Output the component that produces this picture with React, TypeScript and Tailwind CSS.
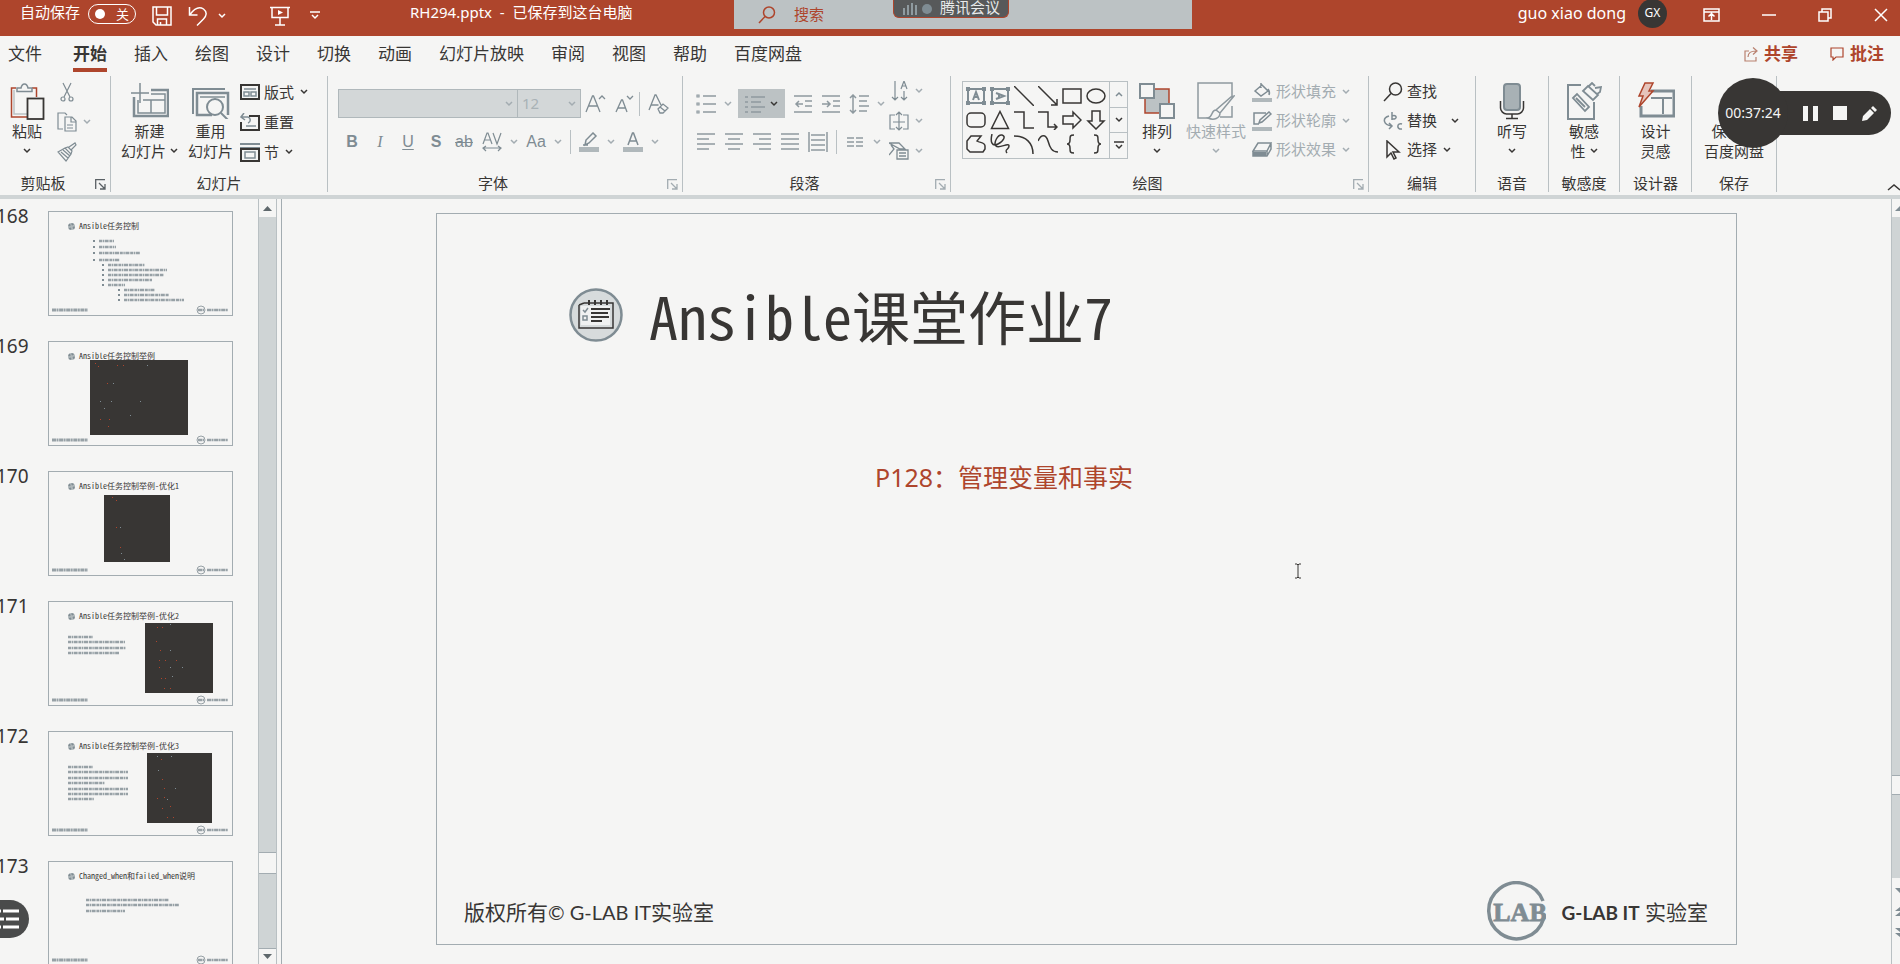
import React, { ReactNode } from 'react';

type IconProps = { w: number; h: number; className?: string; children: ReactNode };

function Svg({ w, h, className = '', children }: IconProps) {
  return (
    <svg
      width={w}
      height={h}
      viewBox={`0 0 ${w} ${h}`}
      fill="none"
      stroke="currentColor"
      strokeWidth="1.5"
      className={`shrink-0 ${className}`}
      aria-hidden="true"
    >
      {children}
    </svg>
  );
}

function Chevron({ muted = false }: { muted?: boolean }) {
  return (
    <Svg w={8} h={6} className={muted ? 'text-[#a3acb1]' : 'text-[#383634]'}>
      <path d="M1 1l3 3 3-3" />
    </Svg>
  );
}

function Launcher({ muted = false }: { muted?: boolean }) {
  return (
    <button
      aria-label="更多选项"
      className={`absolute right-1 bottom-0.5 ${muted ? 'text-[#a3acb1]' : 'text-[#5a6064]'}`}
    >
      <Svg w={11} h={11}>
        <path d="M.7 10V.7H10M4 4l6 6M10 5v5H5" strokeWidth="1.3" />
      </Svg>
    </button>
  );
}

function Group({
  width,
  label,
  launcher,
  children,
}: {
  width: string;
  label: string;
  launcher?: 'on' | 'muted';
  children: ReactNode;
}) {
  return (
    <section
      aria-label={label}
      className={`relative flex h-[116px] shrink-0 flex-col border-r border-[#b9c0c3] ${width}`}
    >
      <div className="flex flex-1">{children}</div>
      <div className={`mb-px h-4 text-center leading-4 ${launcher ? 'pr-6' : ''}`}>{label}</div>
      {launcher && <Launcher muted={launcher === 'muted'} />}
    </section>
  );
}

function BigButton({
  icon,
  lines,
  chevron,
  muted = false,
  width,
}: {
  icon: ReactNode;
  lines: string[];
  chevron?: boolean;
  muted?: boolean;
  width: string;
}) {
  const last = lines.length - 1;
  return (
    <button className={`flex flex-col items-center pt-1.5 ${width} ${muted ? 'text-[#a3acb1]' : ''}`}>
      <span className="flex h-[38px] items-center">{icon}</span>
      <span className="mt-px flex flex-col items-center leading-5 whitespace-nowrap">
        {lines.map((line, i) => (
          <span key={line} className="flex items-center gap-1">
            {line}
            {chevron && i === last && i > 0 && <Chevron muted={muted} />}
          </span>
        ))}
        {chevron && last === 0 && (
          <span className="flex h-5 items-center">
            <Chevron muted={muted} />
          </span>
        )}
      </span>
    </button>
  );
}

function RowButton({
  icon,
  label,
  chevron,
  muted = false,
}: {
  icon: ReactNode;
  label?: string;
  chevron?: boolean;
  muted?: boolean;
}) {
  return (
    <button
      aria-label={label ?? '工具'}
      className={`flex h-full items-center gap-1 whitespace-nowrap ${muted ? 'text-[#a3acb1]' : ''}`}
    >
      <span className="flex w-5 justify-center">{icon}</span>
      {label}
      {chevron && (
        <span className="ml-0.5">
          <Chevron muted={muted} />
        </span>
      )}
    </button>
  );
}

function Tool({ label, drop, children }: { label: string; drop?: boolean; children: ReactNode }) {
  return (
    <button aria-label={label} className="flex h-5 items-center">
      <span className="flex w-7 items-center justify-center">{children}</span>
      {drop && (
        <span className="flex w-4 justify-center">
          <Chevron muted />
        </span>
      )}
    </button>
  );
}

function Lines({ d }: { d: string }) {
  return (
    <Svg w={20} h={20}>
      <path d={d} />
    </Svg>
  );
}

const Divider = () => <span className="mx-1 h-6 w-px bg-[#b9c0c3]" />;

/* ---------- title bar ---------- */

function TitleBar() {
  return (
    <header className="flex h-9 shrink-0 bg-[#ae452c] text-[15px] text-white">
      <div className="flex h-6 w-[734px] shrink-0 items-center pl-5">
        <label htmlFor="autosave" className="leading-6">自动保存</label>
        <button
          id="autosave"
          role="switch"
          aria-checked="false"
          className="mt-1 ml-2 flex h-5 w-12 items-center justify-between rounded-full border border-white px-1.5 text-[13px]"
        >
          <span className="size-2.5 rounded-full bg-white" />
          <span className="leading-4">关</span>
        </button>
        <button aria-label="保存" className="mt-2 ml-4">
          <Svg w={20} h={20}>
            <path d="M1 1h18v18H4l-3-3zM4.500 1v8h11V1M5.500 19v-6h9v6M8.500 19v-3" />
          </Svg>
        </button>
        <button aria-label="撤消" className="mt-2 ml-4 flex items-center gap-2.5">
          <Svg w={20} h={20}>
            <path d="M1.500 1v8h8M2 8.500C6 3 11 0 15.500 3c4 3 3 7 0 10L9 19.500" />
          </Svg>
          <Svg w={8} h={6}>
            <path d="M1 1l3 3 3-3" />
          </Svg>
        </button>
        <button aria-label="从头开始放映" className="mt-2 ml-11">
          <Svg w={20} h={20}>
            <path d="M0 1.500h20M2 1.500v10h16v-10M10 11.500v7M5 19h10" />
            <path d="M8 4l5 2.500L8 9z" fill="currentColor" stroke="none" />
          </Svg>
        </button>
        <button aria-label="自定义快速访问工具栏" className="mt-1.5 ml-5">
          <Svg w={10} h={9}>
            <path d="M0 1h10M2 4l3 3 3-3" />
          </Svg>
        </button>
        <h1 className="ml-[90px] whitespace-nowrap">RH294.pptx&nbsp; -&nbsp; 已保存到这台电脑</h1>
      </div>
      <div className="relative flex h-[29px] w-[458px] shrink-0 items-center bg-[#bcc2c4] pl-6 text-[#ae452c]">
        <Svg w={18} h={18}>
          <circle cx="11" cy="6.500" r="5.500" />
          <path d="M7 10.500L1 17" />
        </Svg>
        <input
          aria-label="搜索"
          placeholder="搜索"
          className="ml-[18px] w-20 bg-transparent outline-none placeholder:text-[#ae452c]"
        />
        <div className="absolute top-0 left-[159px] flex h-[18px] w-[116px] items-center gap-1 rounded-b-md border-x border-b border-[#ae452c] bg-[#57595a] pl-2 text-[15px] text-[#e8eaea]">
          <Svg w={16} h={12} className="text-[#8f9a9f]">
            <path d="M2 5v7M6 2v10M10 0v12M14 2v10" strokeWidth="2" />
          </Svg>
          <span className="size-2.5 rounded-full bg-[#7f8c93]" />
          <span className="-mt-1 ml-1 leading-4 whitespace-nowrap">腾讯会议</span>
        </div>
      </div>
      <div className="flex h-[26px] flex-1 items-center justify-end pr-3">
        <span className="text-base whitespace-nowrap">guo xiao dong</span>
        <span className="ml-3 flex size-[29px] shrink-0 items-center justify-center rounded-full bg-[#383634] text-xs">
          GX
        </span>
        <button aria-label="功能区显示选项" className="mt-1 ml-9">
          <Svg w={17} h={14}>
            <path d="M1 1h15v12H1zM1 4h15M8.500 12V6M5.500 8.500l3-3 3 3" />
          </Svg>
        </button>
        <button aria-label="最小化" className="mt-1 ml-[42px]">
          <Svg w={14} h={14}>
            <path d="M0 7h14" />
          </Svg>
        </button>
        <button aria-label="还原" className="mt-1 ml-[42px]">
          <Svg w={14} h={14}>
            <path d="M1 4h9v9H1zM4 4V1h9v9h-3" />
          </Svg>
        </button>
        <button aria-label="关闭" className="mt-1 ml-[42px]">
          <Svg w={14} h={14}>
            <path d="M1 1l12 12M13 1L1 13" />
          </Svg>
        </button>
      </div>
    </header>
  );
}

const TABS = ['插入', '绘图', '设计', '切换', '动画', '幻灯片放映', '审阅', '视图', '帮助', '百度网盘'];

function TabRow() {
  return (
    <nav className="flex h-10 shrink-0 items-start pt-1.5 pr-4 pl-2 text-[17px] leading-6">
      <a href="#file" className="mr-[31px]">文件</a>
      <a href="#home" className="mr-[27px] h-[30px] border-b-4 border-[#ae452c] font-bold">开始</a>
      <div className="flex flex-1 gap-[27px]">
        {TABS.map((t) => (
          <a key={t} href={`#${t}`} className="whitespace-nowrap">
            {t}
          </a>
        ))}
      </div>
      <button className="flex items-center gap-1.5 font-bold text-[#ae452c]">
        <Svg w={14} h={16} className="text-[#b9816f]">
          <path d="M5 5H1v10h11v-4M4 11c0-4 3-6 8-6M9 1.500L13 5 9 8.500" strokeWidth="1.2" />
        </Svg>
        共享
      </button>
      <button className="ml-8 flex items-center gap-1.5 font-bold text-[#ae452c]">
        <Svg w={14} h={14}>
          <path d="M1 1h12v9H6l-3 3v-3H1z" strokeWidth="1.2" />
        </Svg>
        批注
      </button>
    </nav>
  );
}

/* ---------- ribbon ---------- */

const SHAPES: ReactNode[] = [
  <g key="tb" className="text-[#7f8c93]"><rect x="2" y="3" width="16" height="14" strokeWidth="2" /><path d="M7 14l3-8 3 8M8 11h4" strokeWidth="2" /><path d="M0 1h4v4H0zM16 1h4v4h-4zM0 15h4v4H0zM16 15h4v4h-4z" fill="currentColor" stroke="none" /></g>,
  <g key="vt" className="text-[#7f8c93]"><rect x="2" y="3" width="16" height="14" strokeWidth="2" /><path d="M6 7l8 3-8 3M9 8v4" strokeWidth="2" /><path d="M0 1h4v4H0zM16 1h4v4h-4zM0 15h4v4H0zM16 15h4v4h-4z" fill="currentColor" stroke="none" /></g>,
  <path key="ln" d="M0 0l20 20" />,
  <path key="ar" d="M0 0l19 19M19 13v6h-6" />,
  <rect key="re" x="1" y="3" width="18" height="14" />,
  <ellipse key="el" cx="10" cy="10" rx="9" ry="7" />,
  <rect key="rr" x="1" y="3" width="18" height="14" rx="4" />,
  <path key="tr" d="M10 1.500L18.500 18.500h-17z" />,
  <path key="el1" d="M0 2h10v16h10" />,
  <path key="el2" d="M0 2h10v15h9M16 14l3 3-3 3" />,
  <path key="ra" d="M1 6h10V2l8 8-8 8v-4H1z" />,
  <path key="da" d="M6 1h8v10h4l-8 8-8-8h4z" />,
  <path key="fr" d="M5 2h10l-4 5c3 2 8 1 8 5v3l-2 3H4l-3-3V7z" />,
  <path key="sc" d="M2 0c-2 8 0 13 6 10s8-8 4-9-9 8-6 11 13-4 13 0-5 3-2 7" />,
  <path key="cu" d="M0 2c12 0 19 7 19 18" />,
  <path key="wa" d="M0 7c3-7 8-7 10 0s4 11 10 11" />,
  <path key="lb" d="M12 1c-4 0-4 1-4 5 0 3-1 4-3 4 2 0 3 1 3 4 0 4 0 5 4 5" />,
  <path key="rb" d="M8 1c4 0 4 1 4 5 0 3 1 4 3 4-2 0-3 1-3 4 0 4 0 5-4 5" />,
];

function ShapeGallery() {
  return (
    <div className="mt-[5px] ml-[11px] flex h-[78px] w-[166px] shrink-0 border border-[#b9c0c3]">
      <div className="grid flex-1 grid-cols-6 place-items-center px-px py-0.5">
        {SHAPES.map((s, i) => (
          <button key={i} aria-label={`形状 ${i + 1}`}>
            <Svg w={20} h={20}>{s}</Svg>
          </button>
        ))}
      </div>
      <div className="flex w-[18px] flex-col divide-y divide-[#b9c0c3] border-l border-[#b9c0c3]">
        <button aria-label="上一行" className="flex flex-1 items-center justify-center text-[#7f8c93]">
          <Svg w={8} h={6}><path d="M1 5l3-3 3 3" /></Svg>
        </button>
        <button aria-label="下一行" className="flex flex-1 items-center justify-center">
          <Chevron />
        </button>
        <button aria-label="其他形状" className="flex flex-1 items-center justify-center">
          <Svg w={10} h={9}><path d="M0 1h10M2 4l3 3 3-3" /></Svg>
        </button>
      </div>
    </div>
  );
}

function Ribbon() {
  return (
    <div className="relative flex h-[119px] shrink-0 overflow-hidden">
      <Group width="w-[111px]" label="剪贴板" launcher="on">
        <BigButton
          width="w-[54px]"
          lines={['粘贴']}
          chevron
          icon={
            <Svg w={36} h={38}>
              <path d="M7 6H2.500v29H18M23 6h4.500v9" stroke="#ae452c" />
              <path d="M5 8v24h13" stroke="#bcc2c4" />
              <path d="M8 9.500V6h4c1-5.500 6-5.500 7 0h4v3.500z" stroke="#7f8c93" />
              <rect x="18.500" y="16.500" width="16" height="20.500" strokeWidth="1.8" />
            </Svg>
          }
        />
        <div className="grid auto-rows-[30px] content-start justify-items-start pt-px pl-[3px] text-[#7f8c93]">
          <RowButton icon={<Svg w={14} h={20}><path d="M3 1l7 14M11 1L4 15" strokeWidth="1.2" /><circle cx="3" cy="17" r="2" strokeWidth="1.2" /><circle cx="11" cy="17" r="2" strokeWidth="1.2" /></Svg>} />
          <RowButton muted chevron icon={<Svg w={20} h={20} className="text-[#7f8c93]"><path d="M6 17H1V1h7l2 2M8 5h7l4 4v10H8zM14 5v5h5M10 13h6M10 16h6" strokeWidth="1.2" /></Svg>} />
          <RowButton icon={<Svg w={20} h={20}><path d="M1 10l7-4 6 6-5 7zM8 6l3-1 4 4-1 3M12 5l6-4 1 2-5 5M4 10l7 6M6 8l7 6" strokeWidth="1.2" /></Svg>} />
        </div>
      </Group>

      <Group width="w-[217px]" label="幻灯片">
        <BigButton
          width="w-[77px]"
          lines={['新建', '幻灯片']}
          chevron
          icon={
            <Svg w={38} h={36} className="text-[#7f8c93]">
              <path d="M9 0v20M0 10h18" />
              <path d="M20 7h17v26H3V14" strokeWidth="2.500" />
              <path d="M12 17h22M20 17v13M7 17v13h27V11H20" />
            </Svg>
          }
        />
        <BigButton
          width="w-[45px]"
          lines={['重用', '幻灯片']}
          icon={
            <Svg w={38} h={36} className="text-[#7f8c93]">
              <path d="M1 31V6h32" strokeWidth="2" />
              <path d="M20 32H5V10h31v22" strokeWidth="2.500" />
              <path d="M8 14h25" />
              <circle cx="23" cy="24" r="8" fill="#f5f5f4" strokeWidth="2" />
              <path d="M29 30l8 8" strokeWidth="2" />
            </Svg>
          }
        />
        <div className="grid auto-rows-[30px] content-start justify-items-start pt-px pl-[7px]">
          <RowButton label="版式" chevron icon={<Svg w={20} h={16}><rect x="1" y="1" width="18" height="14" strokeWidth="2" /><path d="M4 5h12M4 8h5v4H4zM11 8h5v4h-5z" stroke="#7f8c93" /></Svg>} />
          <RowButton label="重置" icon={<Svg w={20} h={18}><path d="M9 3h10v14H1V9" strokeWidth="2" /><path d="M4 0L1 4l4 3M1 4h7c3 1 3 5 0 6M6 13h10" stroke="#7f8c93" /></Svg>} />
          <RowButton label="节" chevron icon={<Svg w={20} h={20}><path d="M0 2h20M0 6h20" stroke="#7f8c93" strokeWidth="2" /><rect x="1" y="7" width="18" height="12" strokeWidth="2" /><rect x="5" y="10" width="10" height="6" stroke="#7f8c93" /></Svg>} />
        </div>
      </Group>

      <Group width="w-[355px]" label="字体" launcher="muted">
        <div className="flex flex-col pt-[13px] pl-2.5 text-[#7f8c93]">
          <div className="flex h-[29px] items-center">
            <div className="relative flex h-[29px] w-[180px] items-center border border-[#b0b8bb] bg-[#d3d7d8]">
              <select aria-label="字体名称" disabled className="h-full w-full appearance-none" />
              <span className="absolute right-1"><Chevron muted /></span>
            </div>
            <div className="relative flex h-[29px] w-[63px] items-center border border-l-0 border-[#b0b8bb] bg-[#d3d7d8]">
              <select aria-label="字号" disabled className="h-full w-full appearance-none pl-1 text-[15px] text-[#a9b2b6]">
                <option>12</option>
              </select>
              <span className="absolute right-1"><Chevron muted /></span>
            </div>
            <button aria-label="增大字号" className="ml-1">
              <Svg w={22} h={20}><path d="M1 18L7.500 2h1L15 18M3.500 12h9M14 5l3-3 3 3" strokeWidth="1.3" /></Svg>
            </button>
            <button aria-label="减小字号" className="ml-2">
              <Svg w={20} h={20}><path d="M1 18L6.500 6h1L12 18M3 14h8M12 2l3 3 3-3" strokeWidth="1.3" /></Svg>
            </button>
            <Divider />
            <button aria-label="清除格式" className="ml-1">
              <Svg w={22} h={20}><path d="M1 16L7 1h1l5 10M3.500 11h7M10 15l5-5 5 4-5 5h-3zM12 13l5 4" strokeWidth="1.3" /></Svg>
            </button>
          </div>
          <div className="mt-3.5 flex h-5 items-center font-['Liberation_Sans'] text-base">
            <Tool label="加粗"><b>B</b></Tool>
            <Tool label="倾斜"><i className="font-['Liberation_Serif']">I</i></Tool>
            <Tool label="下划线"><span className="underline underline-offset-2">U</span></Tool>
            <Tool label="阴影"><b>S</b></Tool>
            <Tool label="删除线"><span className="line-through">ab</span></Tool>
            <Tool label="字符间距" drop>
              <Svg w={20} h={20}><path d="M1 12L5 1h1l4 11M2.500 8h6M11 1l4 11 4-11M1 16h18M4 14l-3 2 3 3M16 14l3 2-3 3" strokeWidth="1.2" /></Svg>
            </Tool>
            <Tool label="更改大小写" drop>Aa</Tool>
            <Divider />
            <Tool label="突出显示颜色" drop>
              <Svg w={20} h={20}><path d="M6 13l1-5 7-7 3 3-7 7zM4 13h5" /><path d="M0 15h20v5H0z" fill="#b0b8bb" stroke="none" /></Svg>
            </Tool>
            <Tool label="字体颜色" drop>
              <Svg w={20} h={20}><path d="M5 13L9.500 1h1L15 13M7 9h6" /><path d="M0 15h20v5H0z" fill="#b0b8bb" stroke="none" /></Svg>
            </Tool>
          </div>
        </div>
      </Group>

      <Group width="w-[268px]" label="段落" launcher="muted">
        <div className="flex flex-col pt-[13px] pl-[9px] text-[#8e999f]">
          <div className="flex h-[29px] items-center">
            <Tool label="项目符号" drop>
              <Svg w={20} h={20}>
                <path d="M7 2h13M7 10h13M7 18h13" />
                <path d="M1 1h2v2H1zM1 9h2v2H1zM1 17h2v2H1z" strokeWidth="1.2" />
              </Svg>
            </Tool>
            <button aria-label="编号" className="mr-0.5 ml-0.5 flex h-[29px] w-[47px] items-center justify-between bg-[#bcc2c4] px-[7px]">
              <Lines d="M0 3h3M6 3h14M0 8h3M6 8h10M0 13h3M6 13h14M0 18h3M6 18h10" />
              <Chevron />
            </button>
            <span className="flex pl-0.5">
              <Tool label="减少缩进"><Lines d="M1 2h18M12 7h7M12 12h7M1 18h18M6 7l-3 3 3 3M3 10h7" /></Tool>
              <Tool label="增加缩进"><Lines d="M1 2h18M12 7h7M12 12h7M1 18h18M6 7l3 3-3 3M1 10h7" /></Tool>
              <Tool label="行距" drop><Lines d="M4 1v18M1 4l3-3 3 3M1 16l3 3 3-3M10 2h10M10 7h8M10 12h10M10 17h8" /></Tool>
            </span>
          </div>
          <div className="mt-3.5 flex h-5 items-center">
            <Tool label="左对齐"><Lines d="M1 2h18M1 7h12M1 12h18M1 17h12" /></Tool>
            <Tool label="居中"><Lines d="M1 2h18M4 7h12M1 12h18M4 17h12" /></Tool>
            <Tool label="右对齐"><Lines d="M1 2h18M7 7h12M1 12h18M7 17h12" /></Tool>
            <Tool label="两端对齐"><Lines d="M1 2h18M1 7h18M1 12h18M1 17h18" /></Tool>
            <Tool label="分散对齐"><Lines d="M1 0v20M19 0v20M3 3h14M3 8h14M3 13h14M3 18h14" /></Tool>
            <Divider />
            <Tool label="分栏" drop><Lines d="M2 6h7M11 6h7M2 10h7M11 10h7M2 14h7M11 14h7" /></Tool>
          </div>
        </div>
        <div className="grid flex-1 auto-rows-[30px] content-start justify-items-start text-[#7f8c93]">
          <RowButton muted chevron icon={<Svg w={20} h={20} className="text-[#7f8c93]"><path d="M6 0v19M3 16l3 3 3-3M12 8l3-8 3 8M13 5h4M15 10v9M12 16l3 3 3-3" strokeWidth="1.2" /></Svg>} />
          <RowButton muted chevron icon={<Svg w={20} h={20} className="text-[#7f8c93]"><path d="M6 4H1v14h5M14 4h5v14h-5M10 1v18M7 4l3-3 3 3M7 16l3 3 3-3M4 11h12" strokeWidth="1.2" /></Svg>} />
          <RowButton muted chevron icon={<Svg w={20} h={18} className="text-[#7f8c93]"><path d="M0 1h10l6 6h-5zM0 13l5-6-3-4M8 8h11v9H8zM10 11h7M10 14h7" strokeWidth="1.3" /></Svg>} />
        </div>
      </Group>

      <Group width="w-[418px]" label="绘图" launcher="muted">
        <ShapeGallery />
        <BigButton
          width="w-[58px]"
          lines={['排列']}
          chevron
          icon={
            <Svg w={36} h={36}>
              <path d="M6 6h24v24H6z" stroke="#ae452c" strokeWidth="1.5" fill="#bcc2c4" />
              <rect x="1" y="1" width="14" height="14" fill="#f5f5f4" stroke="#7f8c93" strokeWidth="2" />
              <rect x="21" y="21" width="14" height="14" fill="#f5f5f4" stroke="#7f8c93" strokeWidth="2" />
            </Svg>
          }
        />
        <BigButton
          width="w-[60px]"
          lines={['快速样式']}
          chevron
          muted
          icon={
            <Svg w={38} h={38} className="text-[#8e999f]">
              <path d="M12 36H1V1h34v13M35 24v11H23" />
              <path d="M37 14L23 31l-4-3L34 15zM19 28c-5 0-3 7-8 8 6 3 12 0 12-5z" />
            </Svg>
          }
        />
        <div className="grid auto-rows-[29px] content-start justify-items-start pt-px pl-1.5">
          <RowButton muted label="形状填充" chevron icon={<Svg w={20} h={20} className="text-[#7f8c93]"><path d="M3 9l7-6 6 6-7 5zM9 1v5M16 7c2 3 2 4 1 6" /><path d="M0 16h20v4H0z" fill="#b0b8bb" stroke="none" /></Svg>} />
          <RowButton muted label="形状轮廓" chevron icon={<Svg w={20} h={20} className="text-[#7f8c93]"><path d="M14 2H2v11h5M7 12l1-3 9-8 2 2-9 8z" /><path d="M0 16h20v4H0z" fill="#b0b8bb" stroke="none" /></Svg>} />
          <RowButton muted label="形状效果" chevron icon={<Svg w={20} h={16} className="text-[#7f8c93]"><path d="M6 1h13l-4 8H1zM1 9v5h14l4-7V1M15 9v5" /><path d="M1 10h13v4H1z" fill="currentColor" stroke="none" /></Svg>} />
        </div>
      </Group>

      <Group width="w-[107px]" label="编辑">
        <div className="grid auto-rows-[29px] content-start justify-items-start pt-px pl-3.5">
          <RowButton label="查找" icon={<Svg w={20} h={20}><circle cx="12.500" cy="7" r="6" /><path d="M8 11.500L1 19" /></Svg>} />
          <div className="flex h-full items-center gap-2.5">
            <RowButton label="替换" icon={<Svg w={20} h={20} className="text-[#7f8c93]"><path d="M9 1v8M9 5c5-2 6 4 0 3M19 13c-5-2-6 6 0 5M6 5c-7 2-6 9 3 10M6 12l3 3-3 3" /></Svg>} />
            <button aria-label="替换选项" className="p-1">
              <Chevron />
            </button>
          </div>
          <RowButton label="选择" chevron icon={<Svg w={16} h={20}><path d="M2 1v16l4-4 3 6 2-1-3-6h6z" /></Svg>} />
        </div>
      </Group>

      <Group width="w-[73px]" label="语音">
        <BigButton
          width="w-full"
          lines={['听写']}
          chevron
          icon={
            <Svg w={26} h={38}>
              <rect x="5" y="2" width="16" height="26" rx="3" fill="#a8b1b5" stroke="#7f8c93" strokeWidth="2" />
              <path d="M1.500 19v7c0 3 3 6 6 6h11c3 0 6-3 6-6v-7M13 32v4M7 36.500h12" />
            </Svg>
          }
        />
      </Group>
      <Group width="w-[71px]" label="敏感度">
        <BigButton
          width="w-full"
          lines={['敏感', '性']}
          chevron
          icon={
            <Svg w={36} h={38} className="text-[#7f8c93]">
              <path d="M15 3H2v34h26V20" strokeWidth="2" />
              <path d="M7 16l4-4 12 13-4 4zM10 16l9 9" strokeWidth="1.8" />
              <path d="M17 9l5-5 10 9-5 5zM23 4l3-3 3 3M29 6l6-1-1 5-3 2" strokeWidth="1.8" />
            </Svg>
          }
        />
      </Group>
      <Group width="w-[72px]" label="设计器">
        <BigButton
          width="w-full"
          lines={['设计', '灵感']}
          icon={
            <Svg w={38} h={38}>
              <path d="M14 9h23v25H4V24" stroke="#7f8c93" strokeWidth="3" />
              <path d="M14 16h21M26 16v16" stroke="#7f8c93" strokeWidth="2" />
              <path d="M8 1h8l-4 8h4L2 25l4-11H2z" stroke="#ae452c" fill="#e6c4bb" />
            </Svg>
          }
        />
      </Group>
      <Group width="w-[85px]" label="保存">
        <BigButton width="w-full" lines={['保存到', '百度网盘']} icon={<span className="size-9" />} />
      </Group>
      <button aria-label="折叠功能区" className="absolute right-0 bottom-1">
        <Svg w={13} h={8}>
          <path d="M1 7l6-5 6 5" />
        </Svg>
      </button>
    </div>
  );
}

/* ---------- slide panel ---------- */

type Slide = {
  no: number;
  title: string;
  /** [x, y, length] of the miniature text rows */
  rows?: [number, number, number][];
  /** [x, y, width, height] of the terminal capture */
  shot?: [number, number, number, number];
  dots?: [number, number, number][];
};

const SLIDES: Slide[] = [
  {
    no: 168,
    title: 'Ansible任务控制',
    rows: [
      [44, 29, 22], [44, 35, 24], [44, 41, 48], [44, 48, 28],
      [53, 53, 44], [53, 58, 66], [53, 63, 63], [53, 68, 51], [53, 73, 24],
      [69, 78, 38], [69, 83, 52], [69, 88, 67],
    ],
  },
  {
    no: 169,
    title: 'Ansible任务控制举例',
    shot: [42, 19, 98, 75],
    dots: [[5, 3, 1], [8, 6, 1], [27, 5, 1], [33, 5, 1], [17, 23, 1], [23, 23, 0], [10, 41, 0], [21, 41, 0], [14, 48, 0], [50, 41, 0], [10, 59, 1], [19, 59, 1], [40, 55, 0], [18, 66, 1], [57, 5, 0]],
  },
  {
    no: 170,
    title: 'Ansible任务控制举例-优化1',
    shot: [56, 24, 66, 67],
    dots: [[8, 2, 1], [12, 5, 1], [12, 32, 1], [16, 32, 0], [16, 52, 1], [17, 58, 0], [20, 64, 0]],
  },
  {
    no: 171,
    title: 'Ansible任务控制举例-优化2',
    rows: [[20, 35, 25], [20, 40, 57], [20, 46, 58], [20, 51, 51]],
    shot: [97, 22, 68, 70],
    dots: [[12, 4, 1], [17, 4, 1], [25, 1, 0], [11, 18, 1], [15, 27, 1], [25, 27, 0], [14, 37, 1], [20, 37, 1], [31, 37, 1], [14, 44, 1], [25, 44, 0], [37, 44, 0], [16, 55, 1], [20, 55, 1], [27, 53, 0], [19, 65, 1], [25, 65, 1]],
  },
  {
    no: 172,
    title: 'Ansible任务控制举例-优化3',
    rows: [[20, 35, 25], [20, 40, 60], [20, 46, 60], [20, 51, 37], [20, 57, 60], [20, 62, 60], [20, 67, 26]],
    shot: [99, 22, 65, 70],
    dots: [[10, 3, 0], [14, 6, 1], [24, 3, 0], [11, 17, 0], [15, 26, 1], [17, 35, 1], [28, 35, 0], [10, 45, 1], [17, 44, 1], [20, 46, 0], [15, 55, 1], [23, 53, 1], [20, 64, 1], [26, 64, 1]],
  },
  {
    no: 173,
    title: 'Changed_when和failed_when说明',
    rows: [[38, 38, 83], [38, 43, 93], [38, 49, 39]],
  },
];

function Thumbnail({ slide }: { slide: Slide }) {
  return (
    <li className="flex h-[130px] items-start">
      <span className="flex w-12 shrink-0 justify-start text-[19px] leading-[10px]">
        <span className="-ml-1">{slide.no}</span>
      </span>
      <button
        aria-label={slide.title}
        className="relative flex h-[105px] w-[185px] shrink-0 items-start border border-[#a3acb1] text-left"
      >
        <svg viewBox="0 0 185 105" className="absolute -top-px -left-px h-[105px] w-[185px]" aria-hidden="true">
          {slide.rows?.map(([x, y, len]) => (
            <g key={`${x}-${y}`}>
              {slide.no === 168 && <rect x={x + 1} y={y} width="2" height="2" fill="#7f8c93" />}
              <path
                d={`M${slide.no === 168 ? x + 7 : x} ${y + 1}h${slide.no === 168 ? len - 7 : len}`}
                stroke="#97a1a6"
                strokeWidth="2.5"
                strokeDasharray="3 .6 1.400 .6 4 .8"
              />
            </g>
          ))}
          <path d="M4 99h36" stroke="#97a1a6" strokeWidth="3" strokeDasharray="4 .5 2 .6" />
          <circle cx="153" cy="99" r="4" fill="none" stroke="#97a1a6" />
          <path d="M150 99h6M159 99h21" stroke="#97a1a6" strokeWidth="2.500" strokeDasharray="4 .5 2 .6" />
          {slide.shot && (
            <g transform={`translate(${slide.shot[0]} ${slide.shot[1]})`}>
              <rect width={slide.shot[2]} height={slide.shot[3]} fill="#383634" />
              {slide.dots?.map(([x, y, red]) => (
                <rect key={`${x}-${y}`} x={x} y={y} width="1" height="1" fill={red ? '#ae452c' : '#7f8c93'} />
              ))}
            </g>
          )}
        </svg>
        <span className="relative flex items-center gap-1 pt-[9px] pl-[19px] font-['Noto_Sans_Mono_CJK_SC','Noto_Sans_CJK_SC',monospace] text-[8px] leading-[10px] font-medium whitespace-nowrap">
          <span className="size-[7px] rounded-full border-2 border-dotted border-[#7f8c93] bg-[#b0b8bb]" />
          {slide.title}
        </span>
      </button>
    </li>
  );
}

function ThumbPanel() {
  return (
    <aside className="flex w-[282px] shrink-0 overflow-hidden border-r border-[#a3acb1]">
      <ul className="w-[258px] pt-3">
        {SLIDES.map((s) => (
          <Thumbnail key={s.no} slide={s} />
        ))}
      </ul>
      <div className="flex w-[19px] flex-col border-x border-[#b9c0c3] bg-[#cfd4d5]">
        <button aria-label="向上滚动" className="flex h-[18px] items-center justify-center bg-[#f5f5f4] text-[#5f686c]">
          <Svg w={9} h={5}><path d="M0 5l4.500-5L9 5z" fill="currentColor" stroke="none" /></Svg>
        </button>
        <div className="flex-1" />
        <div className="h-[22px] border-y border-[#a3acb1] bg-[#f5f5f4]" />
        <div className="h-[74px]" />
        <button aria-label="向下滚动" className="flex h-4 items-center justify-center border-t border-[#a3acb1] bg-[#f5f5f4] text-[#5f686c]">
          <Svg w={9} h={5}><path d="M0 0l4.500 5L9 0z" fill="currentColor" stroke="none" /></Svg>
        </button>
      </div>
    </aside>
  );
}

/* ---------- main slide ---------- */

function MainSlide() {
  return (
    <main className="relative flex min-w-0 flex-1 items-start justify-center px-[154px] pt-3.5">
      <article className="flex aspect-[1302/733] w-full flex-col border border-[#a3acb1]">
        <div className="flex items-center gap-[26px] pt-[71px] pl-[132px]">
          <Svg w={54} h={54} className="text-[#383634]">
            <circle cx="27" cy="27" r="25.500" stroke="#7f8c93" strokeWidth="2.500" fill="#d7dbdc" />
            <path d="M10 17v23h34V15H15M10 17l5-2" />
            <path d="M12 18h29v19H12z" fill="#f0f1f1" stroke="none" />
            <path d="M20 12v5M26 12v5M32 12v5M38 12v5" strokeWidth="2" />
            <path d="M22 21h19M22 25h17M22 29h18M22 33h11" strokeWidth="2" />
            <path d="M14 22l2 2 3-4M14 28h4v4h-4z" stroke="#7f8c93" />
          </Svg>
          <h2 className="font-['Noto_Sans_Mono_CJK_SC','Noto_Sans_CJK_SC',monospace] text-[58px] leading-[60px] whitespace-nowrap">
            Ansible课堂作业7
          </h2>
        </div>
        <p className="mt-[115px] pl-[438px] text-[25px] leading-[34px] text-[#ae452c]">P128：管理变量和事实</p>
        <footer className="mt-auto flex items-center justify-between pr-7 pb-[3px] pl-[27px] font-[Lato,'Noto_Sans_CJK_SC',sans-serif] text-[21px]">
          <span>
            版权所有<span className="text-xl">© G-LAB IT</span>实验室
          </span>
          <span className="flex items-center gap-4">
            <svg width="60" height="60" viewBox="0 0 60 60" aria-hidden="true">
              <path d="M57 20A28 28 0 1 0 57.500 38" fill="none" stroke="#7f8c93" strokeWidth="3.500" />
              <text x="34" y="40" textAnchor="middle" fontSize="26" fontWeight="700" fill="#7f8c93" stroke="#7f8c93" strokeWidth=".8" className="font-['Liberation_Serif']">LAB</text>
            </svg>
            <span>
              <b className="text-[19px]">G-LAB IT</b> 实验室
            </span>
          </span>
        </footer>
      </article>
      <Svg w={8} h={16} className="absolute top-[364px] left-[1012px] text-[#383634]">
        <path d="M1 1h2l1 1 1-1h2M4 2v12M1 15h2l1-1 1 1h2" strokeWidth="1" />
      </Svg>
    </main>
  );
}

function RightScroll() {
  return (
    <div className="flex w-[9px] shrink-0 flex-col items-end overflow-hidden border-l border-[#b9c0c3] text-[#7f8c93]">
      <div className="flex h-[18px] items-center"><Svg w={5} h={5}><path d="M0 5l5-5v5z" fill="currentColor" stroke="none" /></Svg></div>
      <div className="w-full flex-1 bg-[#cfd4d5]" />
      <div className="h-5 w-full border-y border-[#a3acb1]" />
      <div className="h-[83px] w-full bg-[#cfd4d5]" />
      <div className="flex h-[86px] flex-col items-end pt-2.5">
        <Svg w={5} h={50}>
          <path d="M0 0h5v5zM0 23l5-4v4zM0 28l5-4v4zM0 40h5v4zM0 45h5v4z" fill="currentColor" stroke="none" />
        </Svg>
      </div>
    </div>
  );
}

/* ---------- floating widgets ---------- */

function Recorder() {
  return (
    <div className="absolute top-[78px] right-[9px] flex h-[70px] w-[173px] items-center text-[#f5f5f4]">
      <div className="absolute inset-y-[13px] right-0 left-9 rounded-full bg-[#383634]" />
      <div className="relative flex size-[70px] shrink-0 items-center justify-center rounded-full bg-[#383634] text-sm">
        00:37:24
      </div>
      <div className="relative ml-[15px] flex items-center gap-[15px]">
        <button aria-label="暂停" className="flex gap-[5px]">
          <span className="h-[15px] w-[5px] bg-[#f5f5f4]" />
          <span className="h-[15px] w-[5px] bg-[#f5f5f4]" />
        </button>
        <button aria-label="停止" className="size-3.5 bg-[#f5f5f4]" />
        <button aria-label="画笔">
          <Svg w={15} h={15}>
            <path d="M0 15l1-5 7-7 4 4-7 7zM9 2l2-2 4 4-2 2z" fill="currentColor" stroke="none" />
          </Svg>
        </button>
      </div>
    </div>
  );
}

function OutlineButton() {
  return (
    <button
      aria-label="目录"
      className="absolute bottom-[26px] left-0 flex h-[38px] w-[29px] items-center rounded-r-full bg-[#4a4b4b] text-white"
    >
      <Svg w={20} h={20}>
        <path d="M3 2h16M6 10h13M3 18h16M0 2h1M0 10h4M0 18h1" strokeWidth="3" />
      </Svg>
    </button>
  );
}

export default function App() {
  return (
    <div className="relative flex h-screen flex-col overflow-hidden bg-[#f5f5f4] font-['Noto_Sans','Noto_Sans_CJK_SC',sans-serif] text-[15px] text-[#383634]">
      <TitleBar />
      <TabRow />
      <Ribbon />
      <div className="h-1 shrink-0 bg-[#cfd4d5]" />
      <div className="flex min-h-0 flex-1">
        <ThumbPanel />
        <MainSlide />
        <RightScroll />
      </div>
      <Recorder />
      <OutlineButton />
    </div>
  );
}
